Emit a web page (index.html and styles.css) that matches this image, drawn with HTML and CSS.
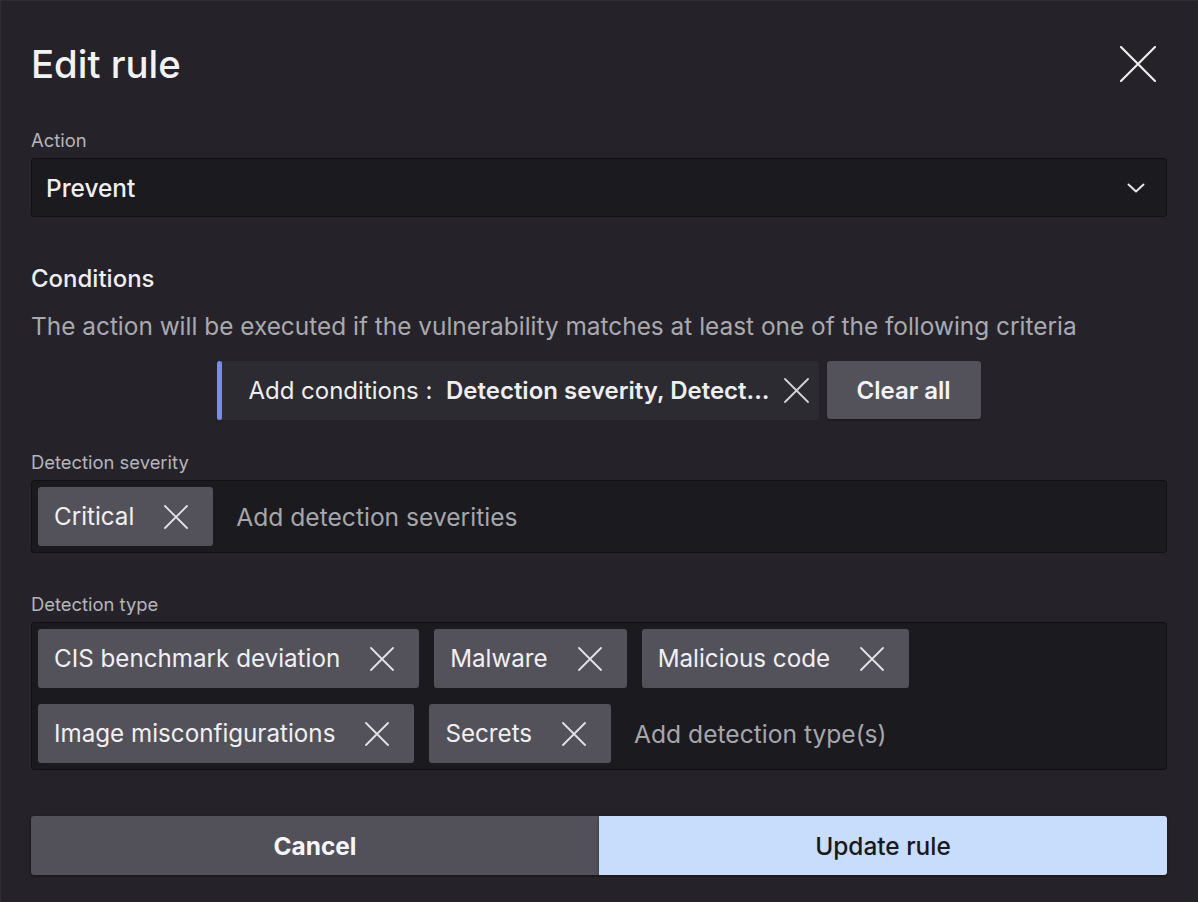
FILE: index.html
```html
<!DOCTYPE html>
<html lang="en">
<head>
<meta charset="utf-8">
<title>Edit rule</title>
<link rel="stylesheet" href="styles.css">
</head>
<body>
<div class="modal">
  <header class="header">
    <h1 class="title">Edit rule</h1>
    <button class="close" aria-label="Close">
      <svg width="36" height="36" viewBox="0 0 36 36"><path d="M1 1L35 35M35 1L1 35" stroke="#eeeef0" stroke-width="2.2" stroke-linecap="round" fill="none"/></svg>
    </button>
  </header>

  <div class="field field-action">
    <div class="label">Action</div>
    <div class="select">
      <span class="select-value">Prevent</span>
      <svg class="chevron" width="18" height="10" viewBox="0 0 18 10"><path d="M1.5 1.5L9 8.5L16.5 1.5" stroke="#e6e6ea" stroke-width="2" stroke-linecap="round" stroke-linejoin="round" fill="none"/></svg>
    </div>
  </div>

  <h2 class="section-title">Conditions</h2>
  <p class="description">The action will be executed if the vulnerability matches at least one of the following criteria</p>

  <div class="cond-row">
    <div class="cond-bar">
      <span class="cond-accent"></span>
      <span class="cond-text">Add conditions :&nbsp; <b>Detection severity, Detect...</b></span>
      <svg class="cond-x" width="25" height="25" viewBox="0 0 25 25"><path d="M1 1L24 24M24 1L1 24" stroke="#d4d4d8" stroke-width="1.8" stroke-linecap="round" fill="none"/></svg>
    </div>
    <button class="clear-btn">Clear all</button>
  </div>

  <div class="field field-severity">
    <div class="label">Detection severity</div>
    <div class="multi">
      <span class="chip">Critical<svg class="chip-x" width="24" height="24" viewBox="0 0 24 24"><path d="M1 1L23 23M23 1L1 23" stroke="#e2e2e6" stroke-width="1.8" stroke-linecap="round" fill="none"/></svg></span>
      <span class="placeholder">Add detection severities</span>
    </div>
  </div>

  <div class="field field-type">
    <div class="label">Detection type</div>
    <div class="multi">
      <span class="chip">CIS benchmark deviation<svg class="chip-x" width="24" height="24" viewBox="0 0 24 24"><path d="M1 1L23 23M23 1L1 23" stroke="#e2e2e6" stroke-width="1.8" stroke-linecap="round" fill="none"/></svg></span>
      <span class="chip">Malware<svg class="chip-x" width="24" height="24" viewBox="0 0 24 24"><path d="M1 1L23 23M23 1L1 23" stroke="#e2e2e6" stroke-width="1.8" stroke-linecap="round" fill="none"/></svg></span>
      <span class="chip">Malicious code<svg class="chip-x" width="24" height="24" viewBox="0 0 24 24"><path d="M1 1L23 23M23 1L1 23" stroke="#e2e2e6" stroke-width="1.8" stroke-linecap="round" fill="none"/></svg></span>
      <span class="chip">Image misconfigurations<svg class="chip-x" width="24" height="24" viewBox="0 0 24 24"><path d="M1 1L23 23M23 1L1 23" stroke="#e2e2e6" stroke-width="1.8" stroke-linecap="round" fill="none"/></svg></span>
      <span class="chip">Secrets<svg class="chip-x" width="24" height="24" viewBox="0 0 24 24"><path d="M1 1L23 23M23 1L1 23" stroke="#e2e2e6" stroke-width="1.8" stroke-linecap="round" fill="none"/></svg></span>
      <span class="placeholder">Add detection type(s)</span>
    </div>
  </div>

  <div class="actions">
    <button class="btn btn-cancel">Cancel</button>
    <button class="btn btn-primary">Update rule</button>
  </div>
</div>
</body>
</html>
```

FILE: styles.css
```css
* { box-sizing: border-box; }

html, body {
  margin: 0;
  padding: 0;
  background: #252329;
}

body {
  font-family: Inter, "Noto Sans", sans-serif;
  color: #ececee;
  width: 1198px;
  height: 902px;
  overflow: hidden;
}

.modal {
  height: 902px;
  padding: 40px 31px 0 30px;
  border-left: 1px solid #2f2e35;
  border-top: 1px solid #2f2e35;
}

.header {
  display: flex;
  align-items: center;
  justify-content: space-between;
  height: 46px;
}

.title {
  margin: 0;
  font-size: 38.3px;
  line-height: 44px;
  font-weight: 500;
  color: #f2f2f4;
}

.close {
  background: none;
  border: none;
  padding: 0;
  margin-right: 11px;
  width: 36px;
  height: 36px;
  display: flex;
}

.label {
  font-size: 18.4px;
  line-height: 20px;
  color: #b4b4bb;
  margin-bottom: 8px;
}

.field-action { margin-top: 43px; }

.select {
  height: 59px;
  background: #1b1a1f;
  border: 1px solid #111014;
  border-radius: 3px;
  display: flex;
  align-items: center;
  justify-content: space-between;
  padding: 0 21px 0 14px;
}

.select-value {
  font-size: 24.4px;
  font-weight: 500;
  color: #efeff1;
}

.section-title {
  margin: 48px 0 0;
  font-size: 24px;
  line-height: 28px;
  font-weight: 500;
  color: #eeeef0;
}

.description {
  margin: 19px 0 0;
  font-size: 24.4px;
  line-height: 28px;
  color: #a9a9b0;
  white-space: nowrap;
}

.cond-row {
  margin-top: 21px;
  display: flex;
  justify-content: center;
  gap: 8px;
}

.cond-bar {
  height: 59px;
  background: #2c2b31;
  display: flex;
  align-items: center;
  padding-right: 10px;
  border-radius: 3px;
}

.cond-accent {
  width: 5px;
  align-self: stretch;
  background: #7a8cf2;
  border-radius: 3px;
}

.cond-text {
  margin-left: 26px;
  font-size: 24px;
  color: #eeeef0;
  white-space: nowrap;
}

.cond-text b { font-weight: 600; }

.cond-x { margin-left: 14px; }

.clear-btn {
  height: 58px;
  padding: 0 30px;
  background: #53525b;
  border: none;
  border-radius: 3px;
  color: #f4f4f6;
  font-family: inherit;
  font-size: 24px;
  font-weight: 600;
  box-shadow: 0 1px 2px rgba(0,0,0,0.4);
}

.field-severity { margin-top: 32px; }
.field-type { margin-top: 41px; }

.multi {
  background: #1b1a1f;
  border: 1px solid #111014;
  border-radius: 3px;
  padding: 6px;
  display: flex;
  flex-wrap: wrap;
  align-items: center;
  column-gap: 15px;
  row-gap: 16px;
}

.chip {
  height: 59px;
  display: inline-flex;
  align-items: center;
  background: #53525b;
  border-radius: 3px;
  padding: 0 25px 0 16px;
  font-size: 24.2px;
  color: #f0f0f2;
  white-space: nowrap;
}

.chip-x { margin-left: 30px; }

.placeholder {
  font-size: 24.6px;
  color: #a6a6ad;
  margin-left: 8px;
}

.actions {
  margin-top: 46px;
  display: flex;
}

.btn {
  flex: 1 1 0;
  height: 59px;
  border: none;
  font-family: inherit;
  font-size: 24.4px;
  box-shadow: 0 1px 3px rgba(0,0,0,0.45);
}

.btn-cancel {
  background: #52515a;
  color: #f6f6f8;
  font-weight: 700;
  border-radius: 3px 0 0 3px;
}

.btn-primary {
  background: #c8dcfc;
  color: #18181d;
  font-weight: 500;
  border-radius: 0 3px 3px 0;
}
```
